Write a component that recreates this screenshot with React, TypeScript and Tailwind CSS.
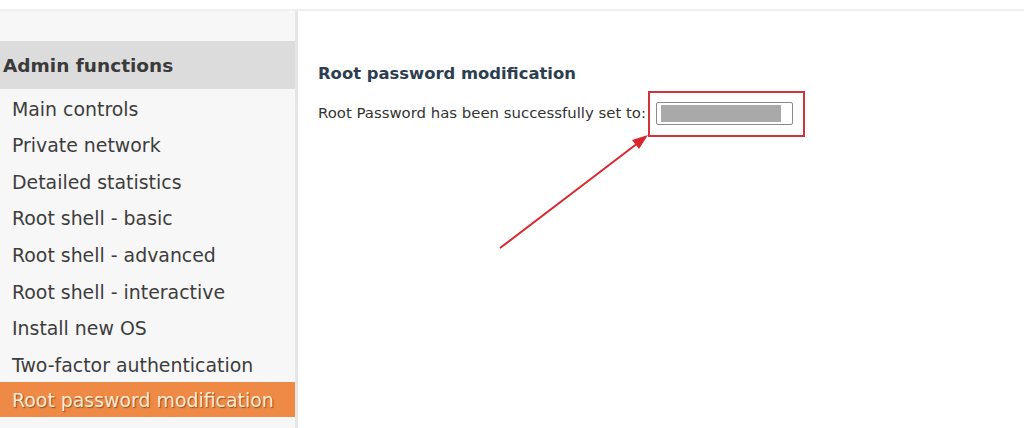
import React from "react";

const items = [
  "Main controls",
  "Private network",
  "Detailed statistics",
  "Root shell - basic",
  "Root shell - advanced",
  "Root shell - interactive",
  "Install new OS",
  "Two-factor authentication",
];

const App = () => {
  return (
    <div className="h-[428px] w-[1024px] overflow-hidden bg-white font-['DejaVu_Sans',sans-serif]">
      <div className="h-[9px] bg-white" />
      <div className="h-[2px] bg-[#efefef]" />
      <div className="flex h-[417px]">
        {/* Sidebar */}
        <div className="w-[295px] shrink-0 bg-[#f7f7f7] pt-[30px]">
          <div className="flex h-[48px] items-center bg-[#dcdcdc] pl-[3px] pt-[2px] text-[18.5px] font-bold text-[#3a3a3a]">
            Admin functions
          </div>
          {items.map((item) => (
            <div
              key={item}
              className="flex h-[36.6px] items-center pl-[12px] pt-[3px] text-[18.9px] text-[#3d3d3d]"
            >
              {item}
            </div>
          ))}
          <div className="flex h-[35px] items-center bg-[#ee8a46] pl-[12px] pt-[2px] text-[18.9px] text-[#fdebd3] [text-shadow:1px_1px_1px_rgba(90,40,10,0.6)]">
            Root password modification
          </div>
        </div>
        <div className="w-[3px] shrink-0 bg-[#e6e6e6]" />
        {/* Content */}
        <div className="relative flex-1 pl-[20px] pt-[51px]">
          <h2 className="text-[16.4px] font-bold text-[#2c3e50]">Root password modification</h2>
          <div className="mt-[4px] flex items-center text-[14.9px] text-[#333]">
            <span>Root Password has been successfully set to:</span>
            <div className="ml-[2px] flex h-[46px] w-[157px] items-center border-2 border-[#d2323a] pl-[6px]">
              <div className="flex h-[23px] w-[137px] items-center rounded-[2px] border border-[#8a8a8a] bg-white px-[4px]">
                <div className="h-[17px] w-[120px] bg-[#a9a9a9]" />
              </div>
            </div>
          </div>
          <svg
            className="pointer-events-none absolute left-0 top-0"
            width="726"
            height="417"
            viewBox="0 0 726 417"
          >
            <line x1="202" y1="237" x2="340" y2="132" stroke="#d9272e" strokeWidth="2" />
            <polygon points="350,124 334,129 341,138" fill="#d9272e" />
          </svg>
        </div>
      </div>
    </div>
  );
};

export default App;
